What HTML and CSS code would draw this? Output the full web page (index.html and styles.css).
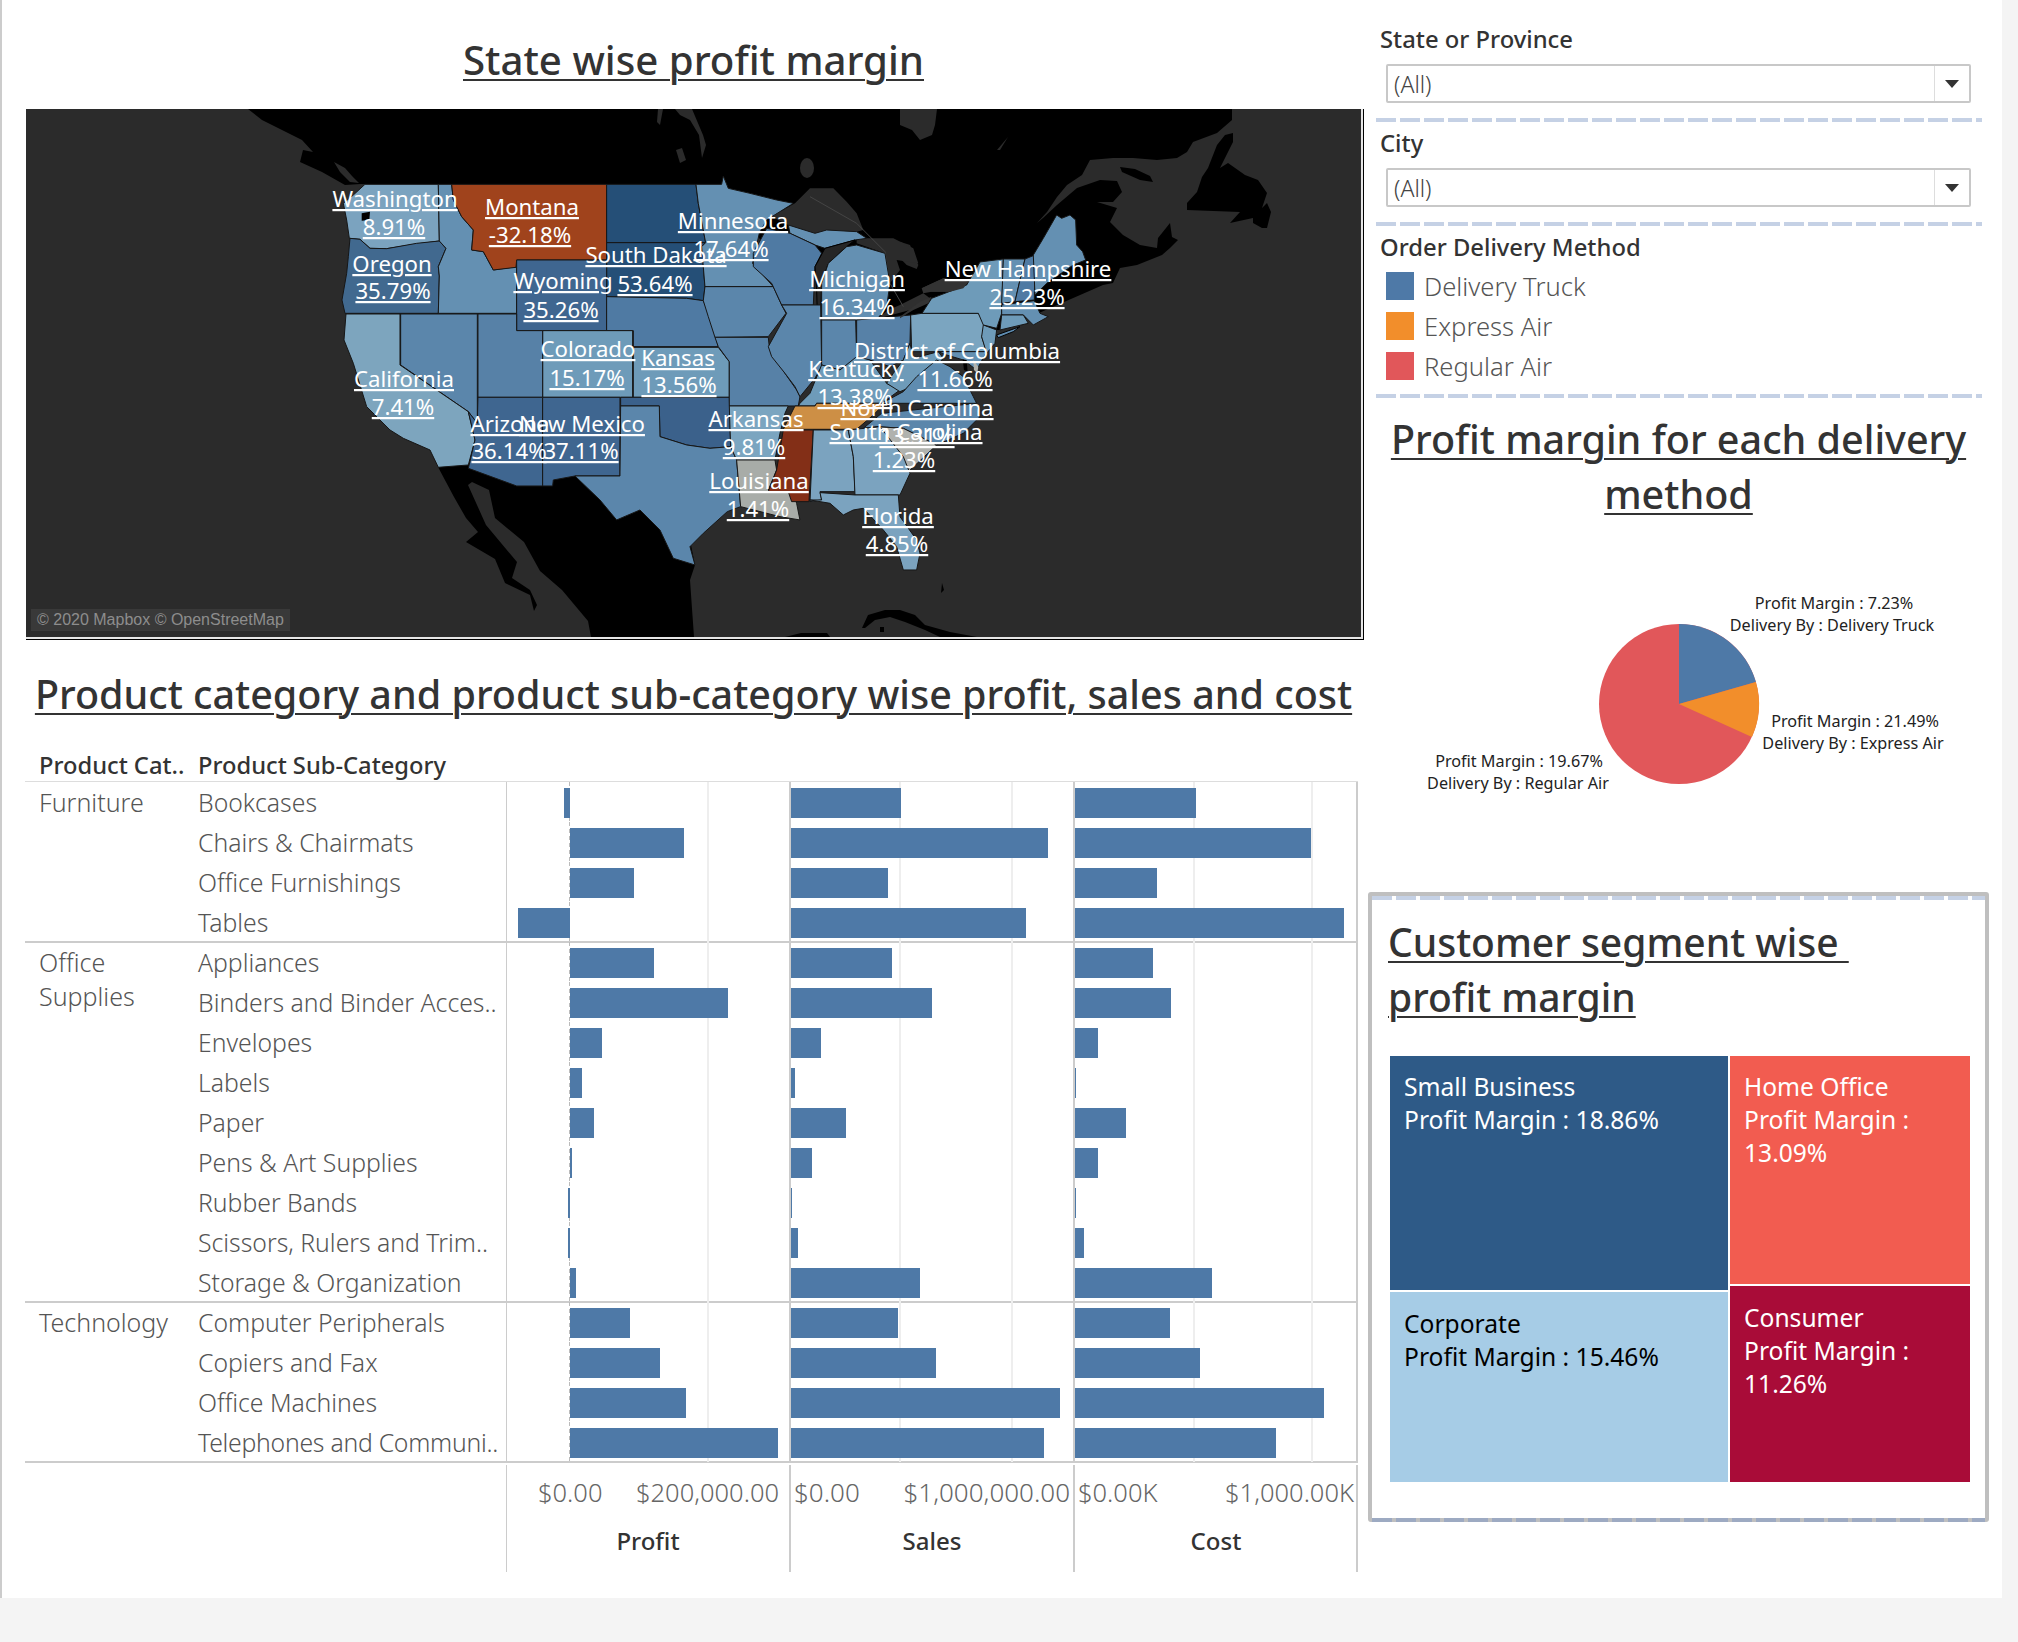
FILE: index.html
```html
<!DOCTYPE html>
<html lang="en">
<head>
    <meta charset="UTF-8">
    <title>Profit dashboard</title>
    <link rel="stylesheet" href="styles.css">
</head>
<body>
<div class="page">
    <div class="left">
        <h1 class="title top-title"><u>State wise profit margin</u></h1>
        <div class="map-frame">
            <div class="map">
                <svg class="map-svg" viewBox="26 109 1336 528" xmlns="http://www.w3.org/2000/svg">
                    <rect x="26" y="109" width="1336" height="528" fill="#2b2b2b"/>
                    <!-- land outside the US, page coordinates -->
                    <g fill="#000">
                        <path d="M248 109L262 120L290 134L302 140L313 152L303 150L300 162L322 172L345 185L361 184L700 200L900 330L1000 330L1103 285L1113 283L1120 268L1137 265L1162 255L1170 248L1178 240L1172 237L1170 223L1158 238L1157 248L1140 245L1123 235L1110 222L1117 208L1097 202L1113 202L1122 192L1117 181L1100 180L1077 188L1057 205L1043 218L1037 223L1047 212L1057 197L1067 185L1082 175L1090 160L1113 158L1133 158L1157 160L1177 158L1187 152L1193 142L1217 133L1232 120L1232 109Z"/>
                        <path d="M1233 133L1225 135L1217 145L1208 168L1202 177L1197 192L1187 203L1187 210L1240 212L1230 223L1253 218L1253 223L1262 228L1267 228L1271 212L1267 203L1262 208L1267 193L1258 180L1245 175L1228 163L1220 168L1233 142Z"/>
                        <path d="M1120 167L1135 169L1150 176L1153 182L1140 180L1122 172Z"/>
                        <path d="M438 467L454 497L466 518L478 532L466 542L495 559L505 583L530 595L534 611L537 605L530 590L512 578L517 562L486 525L468 485L472 482L489 490L495 518L524 542L540 571L562 590L588 621L591 637L694 637L690 580L695 565L690 540L650 480L600 440Z"/>
                        <path d="M862 628L868 615L885 610L900 610L915 615L925 625L950 632L977 637L940 637L925 630L905 622L890 617L875 620L865 628Z"/>
                        <path d="M785 637L801 633L827 633L830 637Z"/>
                        <path d="M942 583L944 590L941 593ZM880 627L884 627L884 632L880 632Z"/>
                    </g>
                    <!-- water inside the land -->
                    <g fill="#2b2b2b">
                        <path d="M334 162L345 168L352 176L359 183L350 182L340 172Z"/>
                        <path d="M658 109L663 109L660 125L657 122Z"/>
                        <path d="M675 109L692 109L703 135L706 145L702 158L699 135L690 120L680 115Z"/>
                        <path d="M676 150L682 148L686 160L680 163Z"/>
                        <ellipse cx="807" cy="168" rx="7" ry="10"/>
                        <path d="M900 109L937 109L935 125L932 135L920 140L912 130L900 125Z"/>
                        <path d="M997 150L1008 137L1000 150Z"/>
                    </g>
                    <g transform="translate(900 105) scale(.3333)" fill="#2b2b2b">
                        <path d="M0 410L30 420L55 480L50 492L20 480L0 460Z"/>
                    </g>
                    <!-- western states, drawn from a 3x crop -->
                    <g transform="translate(320 170) scale(.3333)" stroke="#161616" stroke-width="3">
                        <polygon fill="#7ba3bf" points="135,43 355,43 358,213 290,222 200,236 150,235 120,208 88,205 80,150 70,100 100,75"/>
                        <polygon fill="#41698f" points="90,205 120,208 150,235 200,236 290,220 358,213 378,235 355,290 358,318 355,430 75,430 66,390 80,310 85,260"/>
                        <polygon fill="#6490b2" points="355,43 395,43 400,90 425,140 460,180 455,240 490,245 520,300 590,290 590,430 355,430 358,318 355,290 378,235 358,213"/>
                        <polygon fill="#a0431c" points="395,43 860,43 860,270 590,270 588,292 520,300 490,245 455,240 460,180 425,140 400,90"/>
                        <polygon fill="#254f77" points="860,43 1128,43 1135,100 1157,218 860,218"/>
                        <polygon fill="#254f77" points="860,218 1157,218 1145,230 1155,350 1150,392 1100,385 860,380"/>
                        <polygon fill="#3f6690" points="590,270 860,270 860,482 590,482"/>
                        <polygon fill="#4f7aa3" points="860,380 1100,385 1150,392 1170,440 1195,530 940,530 940,482 860,482"/>
                        <polygon fill="#6e9bb9" points="668,482 938,482 938,682 668,682"/>
                        <polygon fill="#6e9bb9" points="940,532 1195,532 1228,575 1228,682 940,682"/>
                        <polygon fill="#5781a7" points="474,432 590,432 590,482 668,482 668,682 474,682"/>
                        <polygon fill="#5b86ab" points="242,432 472,432 472,760 445,725 242,585"/>
                        <polygon fill="#7da5be" points="78,432 240,432 240,585 445,725 465,810 445,885 355,892 330,840 250,805 210,780 140,710 100,580 72,510"/>
                        <polygon fill="#3f6690" points="474,682 668,682 668,948 590,948 445,895 465,810 445,725 472,760"/>
                        <polygon fill="#3f6690" points="668,682 900,682 900,918 765,918 700,930 698,948 668,948"/>
                        <polygon fill="#3b618b" points="902,682 1228,682 1232,830 1170,835 1100,825 1020,800 1018,708 902,708"/>
                        <polygon fill="#5b86ab" points="902,708 1018,708 1020,800 1100,825 1170,835 1232,830 1250,870 1262,1010 1222,1025 1150,1090 1110,1130 1125,1185 1060,1165 1020,1080 960,1020 890,1050 840,990 765,918 900,918"/>
                        <polygon fill="#6490b2" points="1128,43 1205,43 1210,18 1225,55 1290,70 1370,90 1420,100 1340,150 1318,190 1298,280 1360,350 1155,350 1145,230 1157,218 1135,100"/>
                        <polygon fill="#5b86ab" points="1155,350 1360,350 1385,405 1398,430 1345,500 1185,502 1165,440 1150,392"/>
                        <polygon fill="#5781a7" points="1185,502 1345,502 1348,530 1395,610 1430,660 1440,680 1435,708 1405,708 1228,708 1228,575 1195,530"/>
                        <polygon fill="#7ba5c0" points="1228,708 1405,708 1395,730 1380,790 1365,870 1250,870 1232,830"/>
                        <polygon fill="#a8aca8" points="1250,870 1365,870 1370,900 1345,960 1420,965 1430,1000 1440,1050 1380,1040 1262,1010"/>
                        <polygon fill="#832f17" points="1390,780 1480,780 1467,995 1415,995 1405,965 1345,965 1370,900"/>
                        <path d="M125 130L150 125L148 150L125 152Z" fill="#000" stroke="none"/>
                    </g>
                    <!-- eastern states -->
                    <g transform="translate(700 170) scale(.3333)" stroke="#161616" stroke-width="3">
                        <path d="M215 140L250 120L285 100L330 55L400 55L440 95L470 130L490 180L470 185L380 180L345 190L265 165Z" fill="#2b2b2b" stroke="none"/>
                        <path d="M470 205L580 205L640 235L655 280L590 270L600 300L570 340L555 250L470 220Z" fill="#2b2b2b" stroke="none"/>
                        <path d="M530 447L630 420L690 385L670 370L600 405L565 420Z" fill="#2f2f2f" stroke="none"/>
                        <path d="M665 355L730 325L805 335L790 355L750 365L695 365Z" fill="#333" stroke="none"/>
                        <polyline points="330,80 470,160 555,245 570,340 610,410" fill="none" stroke="#444"/>
                        <polygon fill="#6490b2" points="265,165 345,190 380,180 470,185 500,205 465,210 375,235 345,225 270,190"/>
                        <polygon fill="#4f7aa3" points="160,290 215,340 245,405 340,405 345,290 365,250 345,225 270,190 200,175 160,250"/>
                        <path d="M350 360L345 290L375 235L465 210L440 230L385 280L365 340L362 450L352 430Z" fill="#262626" stroke="#000"/>
                        <polygon fill="#6490b2" points="365,340 385,280 440,230 470,225 555,250 570,340 560,410 530,450 365,450"/>
                        <polygon fill="#5b86ab" points="245,405 362,405 365,590 345,625 300,680 285,650 255,610 215,560 205,530 260,430"/>
                        <polygon fill="#5b86ab" points="365,450 467,450 470,565 420,600 365,585"/>
                        <polygon fill="#5781a7" points="470,450 632,435 630,520 610,570 570,590 510,570 470,570"/>
                        <polygon fill="#6e9bb9" points="300,700 330,670 365,585 420,600 470,560 510,570 560,640 600,660 545,700 350,700 345,708 295,708"/>
                        <polygon fill="#6e9bb9" points="630,520 640,565 715,545 730,565 660,640 600,665 560,640 580,610 610,570"/>
                        <polygon fill="#5f8cb0" points="545,700 610,665 650,620 710,570 750,590 790,620 820,680 830,700"/>
                        <polygon fill="#7ba5c0" points="666,430 835,430 860,465 845,500 860,545 635,545 632,435"/>
                        <polygon fill="#6490b2" points="715,545 860,545 830,600 790,570 740,555"/>
                        <polygon fill="#cd8f45" points="285,708 345,708 350,700 555,700 520,735 470,778 250,778"/>
                        <polygon fill="#5b86ab" points="490,775 545,730 830,700 840,740 790,790 710,825 610,775 530,770"/>
                        <polygon fill="#b0b2ae" points="530,770 610,775 710,825 620,910 600,870 530,800"/>
                        <polygon fill="#7ba3bf" points="340,780 445,780 460,860 465,965 360,965 365,990 330,995"/>
                        <polygon fill="#7ba3bf" points="445,780 540,770 610,860 630,910 600,975 465,975 460,860"/>
                        <polygon fill="#7ba3bf" points="330,990 365,990 360,968 465,975 595,975 600,1040 650,1110 660,1150 650,1200 610,1200 590,1130 550,1080 490,1015 460,1020 430,1035 390,1000"/>
                        <polygon fill="#6e9bb9" points="850,465 890,480 885,520 860,550 845,500"/>
                        <path d="M788 568L800 570L803 605L792 600Z" fill="#000" stroke="none"/>
                        <path d="M820 570L835 590L832 610L822 600Z" fill="#b0b2ae" stroke="none"/>
                    </g>
                    <!-- new england, from the top right crop -->
                    <g transform="translate(900 105) scale(.3333)" stroke="#161616" stroke-width="3">
                        <polygon fill="#6e9bb9" points="66,625 95,580 200,540 240,471 310,462 305,625 290,670 250,660 235,625"/>
                        <polygon fill="#6490b2" points="310,462 375,462 360,525 345,590 305,595"/>
                        <polygon fill="#4f7aa3" points="375,462 405,450 403,585 345,590 360,525"/>
                        <polygon fill="#6490b2" points="400,450 430,400 470,330 485,340 510,330 527,345 530,420 548,440 557,465 520,480 440,535 405,570"/>
                        <polygon fill="#6490b2" points="305,600 403,587 420,625 445,635 400,660 370,630 305,630"/>
                        <polygon fill="#6e9bb9" points="305,630 370,630 385,655 300,675"/>
                        <path d="M290 690L360 665L340 680L295 698Z" fill="#5f8cb0" stroke="#000"/>
                        <path d="M65 550L130 520L205 530L190 550L150 560L95 560L70 565Z" fill="#333" stroke="none"/>
                        <path d="M0 635L60 590L95 575L85 595L40 615L0 640Z" fill="#333" stroke="none"/>
                    </g>
                    <!-- labels -->
                    <g class="map-labels">
                        <text x="395" y="207">Washington</text><text x="394" y="235">8.91%</text>
                        <text x="532" y="215">Montana</text><text x="530" y="243">-32.18%</text>
                        <text x="392" y="272">Oregon</text><text x="393" y="299">35.79%</text>
                        <text x="656" y="263">South Dakota</text><text x="655" y="292">53.64%</text>
                        <text x="563" y="289">Wyoming</text><text x="561" y="318">35.26%</text>
                        <text x="733" y="229">Minnesota</text><text x="731" y="257">17.64%</text>
                        <text x="588" y="357">Colorado</text><text x="587" y="386">15.17%</text>
                        <text x="678" y="366">Kansas</text><text x="679" y="393">13.56%</text>
                        <text x="404" y="387">California</text><text x="403" y="415">7.41%</text>
                        <text x="510" y="432">Arizona</text><text x="509" y="459">36.14%</text>
                        <text x="582" y="432">New Mexico</text><text x="581" y="459">37.11%</text>
                        <text x="756" y="427">Arkansas</text><text x="754" y="455">9.81%</text>
                        <text x="759" y="489">Louisiana</text><text x="758" y="517">1.41%</text>
                        <text x="857" y="287">Michigan</text><text x="857" y="315">16.34%</text>
                        <text x="1028" y="277">New Hampshire</text><text x="1027" y="305">25.23%</text>
                        <text x="957" y="359">District of Columbia</text><text x="955" y="387">11.66%</text>
                        <text x="856" y="377">Kentucky</text><text x="855" y="405">13.38%</text>
                        <text x="917" y="416">North Carolina</text><text x="917" y="444">13.31%</text>
                        <text x="906" y="440">South Carolina</text><text x="904" y="468">1.23%</text>
                        <text x="898" y="524">Florida</text><text x="897" y="552">4.85%</text>
                    </g>
                </svg>
                <div class="attribution">© 2020 Mapbox © OpenStreetMap</div>
            </div>
        </div>

        <h2 class="title wide-title"><u>Product category and product sub-category wise profit, sales and cost</u></h2>

        <div class="viz">
            <div class="viz-head">
                <div class="head-cat">Product Cat..</div>
                <div class="head-sub">Product Sub-Category</div>
            </div>

            <div class="seg">
                <div class="cat">Furniture</div>
                <div class="rows">
                    <div class="row"><div class="sub">Bookcases</div><div class="pane profit"><span class="bar" style="width:6px;margin-left:57px"></span></div><div class="pane sales"><span class="bar" style="width:110px"></span></div><div class="pane cost"><span class="bar" style="width:121px"></span></div></div>
                    <div class="row"><div class="sub">Chairs &amp; Chairmats</div><div class="pane profit"><span class="bar" style="width:114px"></span></div><div class="pane sales"><span class="bar" style="width:257px"></span></div><div class="pane cost"><span class="bar" style="width:236px"></span></div></div>
                    <div class="row"><div class="sub">Office Furnishings</div><div class="pane profit"><span class="bar" style="width:64px"></span></div><div class="pane sales"><span class="bar" style="width:97px"></span></div><div class="pane cost"><span class="bar" style="width:82px"></span></div></div>
                    <div class="row"><div class="sub">Tables</div><div class="pane profit"><span class="bar" style="width:52px;margin-left:11px"></span></div><div class="pane sales"><span class="bar" style="width:235px"></span></div><div class="pane cost"><span class="bar" style="width:269px"></span></div></div>
                </div>
            </div>

            <div class="seg">
                <div class="cat">Office Supplies</div>
                <div class="rows">
                    <div class="row"><div class="sub">Appliances</div><div class="pane profit"><span class="bar" style="width:84px"></span></div><div class="pane sales"><span class="bar" style="width:101px"></span></div><div class="pane cost"><span class="bar" style="width:78px"></span></div></div>
                    <div class="row"><div class="sub">Binders and Binder Acces..</div><div class="pane profit"><span class="bar" style="width:158px"></span></div><div class="pane sales"><span class="bar" style="width:141px"></span></div><div class="pane cost"><span class="bar" style="width:96px"></span></div></div>
                    <div class="row"><div class="sub">Envelopes</div><div class="pane profit"><span class="bar" style="width:32px"></span></div><div class="pane sales"><span class="bar" style="width:30px"></span></div><div class="pane cost"><span class="bar" style="width:23px"></span></div></div>
                    <div class="row"><div class="sub">Labels</div><div class="pane profit"><span class="bar" style="width:12px"></span></div><div class="pane sales"><span class="bar" style="width:4px"></span></div><div class="pane cost"><span class="bar" style="width:1px"></span></div></div>
                    <div class="row"><div class="sub">Paper</div><div class="pane profit"><span class="bar" style="width:24px"></span></div><div class="pane sales"><span class="bar" style="width:55px"></span></div><div class="pane cost"><span class="bar" style="width:51px"></span></div></div>
                    <div class="row"><div class="sub">Pens &amp; Art Supplies</div><div class="pane profit"><span class="bar" style="width:2px"></span></div><div class="pane sales"><span class="bar" style="width:21px"></span></div><div class="pane cost"><span class="bar" style="width:23px"></span></div></div>
                    <div class="row"><div class="sub">Rubber Bands</div><div class="pane profit"><span class="bar" style="width:2px;margin-left:61px"></span></div><div class="pane sales"><span class="bar" style="width:1px"></span></div><div class="pane cost"><span class="bar" style="width:1px"></span></div></div>
                    <div class="row"><div class="sub">Scissors, Rulers and Trim..</div><div class="pane profit"><span class="bar" style="width:2px;margin-left:61px"></span></div><div class="pane sales"><span class="bar" style="width:7px"></span></div><div class="pane cost"><span class="bar" style="width:9px"></span></div></div>
                    <div class="row"><div class="sub">Storage &amp; Organization</div><div class="pane profit"><span class="bar" style="width:6px"></span></div><div class="pane sales"><span class="bar" style="width:129px"></span></div><div class="pane cost"><span class="bar" style="width:137px"></span></div></div>
                </div>
            </div>

            <div class="seg">
                <div class="cat">Technology</div>
                <div class="rows">
                    <div class="row"><div class="sub">Computer Peripherals</div><div class="pane profit"><span class="bar" style="width:60px"></span></div><div class="pane sales"><span class="bar" style="width:107px"></span></div><div class="pane cost"><span class="bar" style="width:95px"></span></div></div>
                    <div class="row"><div class="sub">Copiers and Fax</div><div class="pane profit"><span class="bar" style="width:90px"></span></div><div class="pane sales"><span class="bar" style="width:145px"></span></div><div class="pane cost"><span class="bar" style="width:125px"></span></div></div>
                    <div class="row"><div class="sub">Office Machines</div><div class="pane profit"><span class="bar" style="width:116px"></span></div><div class="pane sales"><span class="bar" style="width:269px"></span></div><div class="pane cost"><span class="bar" style="width:249px"></span></div></div>
                    <div class="row"><div class="sub tight">Telephones and Communi..</div><div class="pane profit"><span class="bar" style="width:208px"></span></div><div class="pane sales"><span class="bar" style="width:253px"></span></div><div class="pane cost"><span class="bar" style="width:201px"></span></div></div>
                </div>
            </div>

            <div class="axis">
                <div class="axis-pane axis-profit">
                    <div class="ticks"><span>$0.00</span><span>$200,000.00</span></div>
                    <div class="axis-name">Profit</div>
                </div>
                <div class="axis-pane axis-sales">
                    <div class="ticks"><span>$0.00</span><span>$1,000,000.00</span></div>
                    <div class="axis-name">Sales</div>
                </div>
                <div class="axis-pane axis-cost">
                    <div class="ticks"><span>$0.00K</span><span>$1,000.00K</span></div>
                    <div class="axis-name">Cost</div>
                </div>
            </div>
        </div>
    </div>

    <div class="side">
        <div class="filter-title first">State or Province</div>
        <div class="select"><span class="select-value">(All)</span><span class="select-btn"><i class="arrow"></i></span></div>
        <div class="dash"></div>
        <div class="filter-title">City</div>
        <div class="select"><span class="select-value">(All)</span><span class="select-btn"><i class="arrow"></i></span></div>
        <div class="dash"></div>
        <div class="filter-title">Order Delivery Method</div>
        <div class="legend">
            <div class="legend-row"><span class="swatch truck"></span>Delivery Truck</div>
            <div class="legend-row"><span class="swatch express"></span>Express Air</div>
            <div class="legend-row"><span class="swatch regular"></span>Regular Air</div>
        </div>
        <div class="dash"></div>

        <h2 class="title pie-title"><u>Profit margin for each delivery</u><br><u>method</u></h2>

        <svg class="pie" viewBox="1362 540 640 340" xmlns="http://www.w3.org/2000/svg">
            <circle cx="1679" cy="704" r="80" fill="#e1575a"/>
            <path d="M1679 704L1679 624A80 80 0 0 1 1755.9 682Z" fill="#4e79a7"/>
            <path d="M1679 704L1755.9 682A80 80 0 0 1 1751.9 737Z" fill="#f28e2b"/>
            <g class="pie-labels">
                <text x="1834" y="609">Profit Margin : 7.23%</text>
                <text x="1832" y="631">Delivery By : Delivery Truck</text>
                <text x="1855" y="727">Profit Margin : 21.49%</text>
                <text x="1853" y="749">Delivery By : Express Air</text>
                <text x="1519" y="767">Profit Margin : 19.67%</text>
                <text x="1518" y="789">Delivery By : Regular Air</text>
            </g>
        </svg>

        <div class="segment-box">
            <div class="dash"></div>
            <h2 class="title box-title"><u>Customer segment wise&nbsp;</u><br><u>profit margin</u></h2>
            <div class="tree">
                <div class="tree-col tree-left">
                    <div class="cell small-business">Small Business<br>Profit Margin : 18.86%</div>
                    <div class="cell corporate">Corporate<br>Profit Margin : 15.46%</div>
                </div>
                <div class="tree-col tree-right">
                    <div class="cell home-office">Home Office<br>Profit Margin :<br>13.09%</div>
                    <div class="cell consumer">Consumer<br>Profit Margin :<br>11.26%</div>
                </div>
            </div>
            <div class="dash dash-bottom"></div>
        </div>
    </div>
</div>
</body>
</html>
```
FILE: styles.css
```css
/* Tableau style dashboard */
body {
    margin: 0;
    background-color: #f4f4f4;
    color: #333;
    font-family: "Noto Sans", "Open Sans", sans-serif;
}

.page {
    display: flex;
    box-sizing: border-box;
    width: 2002px;
    height: 1598px;
    background-color: #fff;
    border-left: 2px solid #ccc;
}

.left {
    width: 1360px;
    padding-left: 23px;
    box-sizing: border-box;
    flex: none;
}

.title {
    margin: 0;
    font-size: 39.5px;
    font-weight: 500;
    line-height: 55px;
    color: #333;
    text-align: center;
}

.title u {
    text-decoration-thickness: 2px;
    text-underline-offset: 4px;
}

.top-title {
    padding-top: 32px;
    height: 77px;
    box-sizing: content-box;
    font-size: 40.2px;
}

/* map */
.map-frame {
    box-sizing: border-box;
    width: 1338px;
    height: 531px;
    margin-left: 1px;
    padding: 0 2px 2px 0;
    border-right: 1px solid #000;
    border-bottom: 1px solid #000;
    background-color: #e6e6e6;
}

.map {
    position: relative;
    width: 1335px;
    height: 528px;
    overflow: hidden;
}

.map-svg {
    display: block;
    width: 1336px;
    height: 528px;
}

.map-labels text {
    fill: #fff;
    font-size: 22.2px;
    text-anchor: middle;
    text-decoration: underline;
    text-decoration-color: rgba(255, 255, 255, 0.7);
    text-decoration-thickness: 2px;
    text-underline-offset: 3px;
}

.attribution {
    position: absolute;
    left: 5px;
    bottom: 6px;
    height: 22px;
    padding: 0 6px;
    background-color: #393939;
    color: #8d8d8d;
    font-family: "Liberation Sans", sans-serif;
    font-size: 16px;
    line-height: 22px;
}

.wide-title {
    margin-top: 27px;
}

/* bars */
.viz {
    width: 1333px;
}

.viz-head {
    display: flex;
    height: 44px;
    margin-top: 16px;
    border-bottom: 1px solid #ddd;
    box-sizing: border-box;
    font-size: 23.7px;
    font-weight: 500;
    line-height: 54px;
    color: #333;
}

.head-cat {
    width: 173px;
    padding-left: 14px;
    box-sizing: border-box;
}

.seg {
    display: flex;
    border-bottom: 2px solid #ccc;
    margin-bottom: -1px;
}

.cat {
    width: 173px;
    flex: none;
    box-sizing: border-box;
    padding: 3px 40px 0 14px;
    font-size: 25px;
    font-weight: 300;
    line-height: 34px;
    color: #555;
}

.rows {
    flex: 1;
    margin-bottom: -1px;
}

.row {
    display: flex;
    height: 40px;
}

.sub {
    width: 308px;
    flex: none;
    font-size: 24.75px;
    font-weight: 300;
    line-height: 42px;
    color: #555;
    white-space: nowrap;
}

.tight {
    letter-spacing: -0.25px;
}

.pane {
    flex: none;
    box-sizing: border-box;
    padding-top: 6px;
    background-repeat: no-repeat;
}

.profit {
    width: 283px;
    border-left: 1px solid #ccc;
    background-image: repeating-linear-gradient(#bbb 0 4px, transparent 4px 7px), linear-gradient(#eee, #eee);
    background-size: 1px 100%, 2px 100%;
    background-position: 62px 0, 200px 0;
}

.sales {
    width: 284px;
    border-left: 2px solid #ccc;
    background-image: linear-gradient(#eee, #eee), linear-gradient(#eee, #eee);
    background-size: 2px 100%, 2px 100%;
    background-position: 108px 0, 220px 0;
}

.cost {
    width: 285px;
    border-left: 2px solid #ccc;
    border-right: 2px solid #ccc;
    background-image: linear-gradient(#eee, #eee), linear-gradient(#eee, #eee);
    background-size: 2px 100%, 2px 100%;
    background-position: 118px 0, 236px 0;
}

.bar {
    display: block;
    height: 30px;
    background-color: #4e79a7;
}

.profit .bar {
    margin-left: 63px;
}

.axis {
    display: flex;
    height: 107px;
    margin-top: 3px;
    margin-left: 481px;
}

.axis-pane {
    box-sizing: border-box;
    flex: none;
    border-left: 2px solid #ccc;
}

.axis-profit {
    width: 283px;
    border-left-width: 1px;
    padding: 0 10px 0 31px;
}

.axis-sales {
    width: 284px;
    padding: 0 3px;
}

.axis-cost {
    width: 285px;
    padding: 0 2px 0 3px;
    border-right: 2px solid #ccc;
}

.ticks {
    display: flex;
    justify-content: space-between;
    height: 52px;
    font-size: 25.5px;
    font-weight: 300;
    line-height: 54px;
    color: #666;
    white-space: nowrap;
}

.axis-sales .ticks {
    font-size: 26px;
}

.axis-name {
    margin-top: -1px;
    font-size: 24px;
    font-weight: 500;
    line-height: 50px;
    color: #333;
    text-align: center;
}

.axis-profit .axis-name {
    margin-left: -31px;
    margin-right: -10px;
}

/* right side */
.side {
    width: 640px;
    flex: none;
}

.filter-title {
    height: 30px;
    margin: 6px 0 0 18px;
    font-size: 23.8px;
    font-weight: 500;
    line-height: 30px;
    color: #333;
}

.filter-title.first {
    margin-top: 24px;
}

.filter-title + .legend {
    margin-top: 4px;
}

.select {
    display: flex;
    box-sizing: border-box;
    width: 585px;
    height: 39px;
    margin: 10px 0 15px 24px;
    border: 2px solid #c8c8c8;
    border-radius: 2px;
    font-size: 23px;
    font-weight: 300;
    line-height: 37px;
    color: #444;
}

.select-value {
    flex: 1;
    padding-left: 6px;
}

.select-btn {
    display: flex;
    align-items: center;
    justify-content: center;
    width: 34px;
    border-left: 1px solid #ddd;
}

.arrow {
    width: 0;
    height: 0;
    border-left: 7px solid transparent;
    border-right: 7px solid transparent;
    border-top: 8px solid #333;
}

.dash {
    width: 606px;
    height: 4px;
    margin-left: 14px;
    background-image: repeating-linear-gradient(90deg, #c5d1e5 0 20px, transparent 20px 24px);
}

.legend {
    height: 128px;
}

.legend-row {
    display: flex;
    align-items: center;
    height: 40px;
    margin-left: 24px;
    font-size: 25.6px;
    font-weight: 300;
    color: #555;
}

.swatch {
    width: 28px;
    height: 28px;
    margin-right: 10px;
}

.truck {
    background-color: #4e79a7;
}

.express {
    background-color: #f28e2b;
}

.regular {
    background-color: #e1575a;
}

.pie-title {
    margin-top: 14px;
    padding-right: 7px;
    height: 128px;
    box-sizing: border-box;
}

.pie {
    display: block;
    width: 640px;
    height: 340px;
}

.pie-labels text {
    fill: #222;
    font-size: 16.2px;
    text-anchor: middle;
}

.segment-box {
    box-sizing: border-box;
    width: 621px;
    height: 630px;
    margin: 12px 0 0 6px;
    border: 4px solid #bfbfbf;
    border-radius: 3px;
}

.segment-box .dash {
    width: 613px;
    margin-left: 0;
}

.segment-box .dash-bottom {
    margin-top: 36px;
    background-image: repeating-linear-gradient(90deg, #9daac2 0 20px, transparent 20px 24px);
}

.box-title {
    margin: 14px 0 0 16px;
    font-size: 39px;
    text-align: left;
}

.tree {
    display: flex;
    gap: 2px;
    height: 426px;
    margin: 32px 0 0 18px;
    width: 580px;
}

.tree-col {
    display: flex;
    flex-direction: column;
    gap: 2px;
}

.tree-left {
    width: 338px;
}

.tree-right {
    width: 240px;
}

.cell {
    box-sizing: border-box;
    padding: 14px 14px 0;
    font-size: 24.6px;
    line-height: 33px;
    color: #fff;
}

.small-business {
    height: 234px;
    background-color: #2e5a87;
}

.corporate {
    height: 190px;
    padding-top: 15px;
    background-color: #a6cce6;
    color: #000;
}

.home-office {
    height: 228px;
    background-color: #f25c50;
}

.consumer {
    height: 196px;
    padding-top: 15px;
    background-color: #a90c38;
}
```
